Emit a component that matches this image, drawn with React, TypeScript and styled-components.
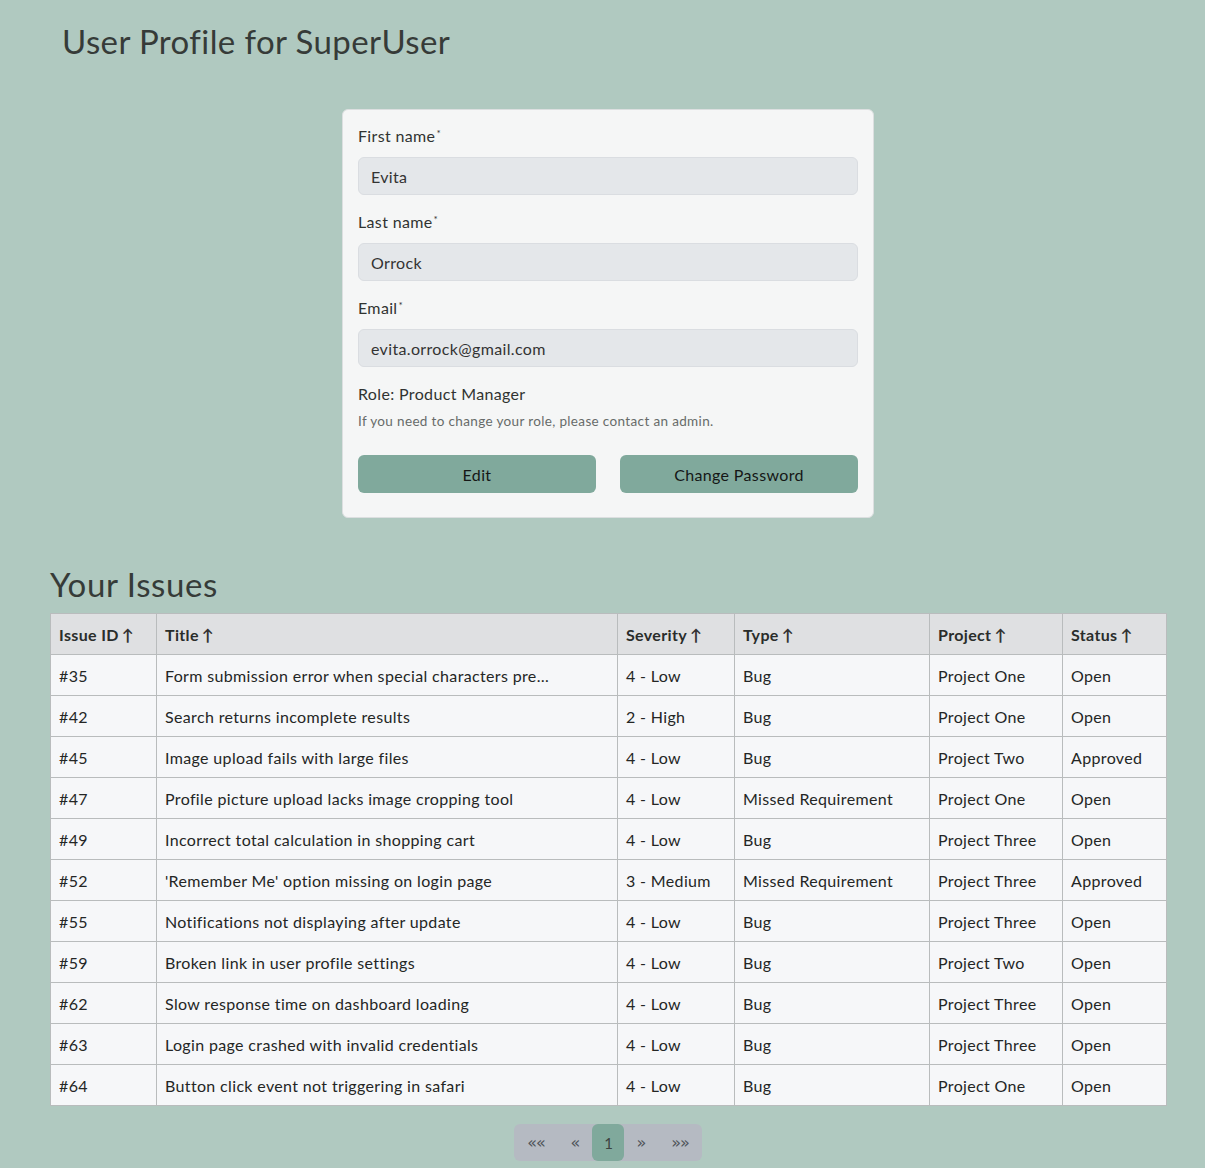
import React from "react";
import styled, { createGlobalStyle } from "styled-components";

const GlobalStyle = createGlobalStyle`
  html, body {
    margin: 0;
    padding: 0;
    background: #b0c9c0;
    font-family: Lato, "Open Sans", sans-serif;
    letter-spacing: 0.35px;
    color: #212529;
  }
`;

const Page = styled.div`
  min-height: 1168px;
  padding: 0 39px 8px 50px;
  box-sizing: border-box;
`;

const PageTitle = styled.h1`
  margin: 0;
  padding: 21px 0 0 12px;
  font-size: 33px;
  font-weight: 400;
  letter-spacing: 0.4px;
  line-height: 40px;
  color: #363b38;
`;

const CardRow = styled.div`
  display: flex;
  justify-content: center;
  padding: 48px 0 0 0;
`;

const Card = styled.form`
  width: 532px;
  box-sizing: border-box;
  padding: 15px 15px 24px;
  background: #f5f6f6;
  border: 1px solid #dcdfe0;
  border-radius: 6px;
  display: flex;
  flex-direction: column;
`;

const Label = styled.label`
  font-size: 16px;
  line-height: 22px;
  color: #303331;
  margin-bottom: 10px;
`;

const Star = styled.span`
  font-size: 10px;
  line-height: 0;
  position: relative;
  top: -5px;
  margin-left: 1px;
`;

const Input = styled.input`
  height: 38px;
  box-sizing: border-box;
  padding: 0 12px;
  margin-bottom: 16px;
  background: #e4e7ea;
  border: 1px solid #dadde1;
  border-radius: 6px;
  font-family: inherit;
  letter-spacing: inherit;
  font-size: 16px;
  color: #333;
  outline: none;
`;

const Role = styled.div`
  font-size: 16px;
  line-height: 22px;
  color: #303331;
`;

const Hint = styled.div`
  font-size: 13.5px;
  line-height: 20px;
  color: #676b69;
  margin-top: 6px;
`;

const Buttons = styled.div`
  display: grid;
  grid-template-columns: 1fr 1fr;
  gap: 24px;
  margin-top: 24px;
`;

const Button = styled.button`
  height: 38px;
  border: none;
  border-radius: 6px;
  background: #80a99c;
  color: #151716;
  font-family: inherit;
  letter-spacing: inherit;
  font-size: 16px;
  cursor: pointer;
`;

const SectionTitle = styled.h2`
  margin: 46px 0 9px;
  font-size: 33px;
  font-weight: 400;
  letter-spacing: 0.6px;
  line-height: 40px;
  color: #363b38;
`;

const Table = styled.table`
  width: 1116px;
  border-collapse: collapse;
  table-layout: fixed;
  font-size: 16px;
`;

const Th = styled.th<{ $w: number }>`
  width: ${(p) => p.$w}px;
  height: 41px;
  box-sizing: border-box;
  padding: 0 8px;
  text-align: left;
  font-weight: 700;
  color: #2a2d2b;
  background: #dfe0e2;
  border: 1px solid #b9bcbd;
  white-space: nowrap;
`;

const Arrow = styled.span`
  font-weight: 700;
  margin-left: 3px;
  color: #333;
`;

const Td = styled.td`
  height: 41px;
  box-sizing: border-box;
  padding: 0 8px;
  background: #f6f7f9;
  border: 1px solid #b9bcbd;
  color: #242625;
  white-space: nowrap;
  overflow: hidden;
`;

const Pager = styled.div`
  display: flex;
  justify-content: center;
  margin-top: 18px;
`;

const PagerGroup = styled.div`
  display: flex;
  background: #b5bac2;
  border-radius: 6px;
  overflow: hidden;
`;

const PageBtn = styled.button<{ $w: number; $active?: boolean }>`
  width: ${(p) => p.$w}px;
  height: 37px;
  border: none;
  border-radius: 6px;
  background: ${(p) => (p.$active ? "#80a99c" : "transparent")};
  color: ${(p) => (p.$active ? "#3d4240" : "#50555a")};
  font-family: ${(p) => (p.$active ? "Lato, sans-serif" : "\"DejaVu Sans\", sans-serif")};
  letter-spacing: -1px;
  font-size: ${(p) => (p.$active ? 15 : 16)}px;
  padding: 0;
  cursor: pointer;
`;

const columns = [
  { name: "Issue ID", w: 106 },
  { name: "Title", w: 461 },
  { name: "Severity", w: 117 },
  { name: "Type", w: 195 },
  { name: "Project", w: 133 },
  { name: "Status", w: 104 },
];

const issues = [
  ["#35", "Form submission error when special characters pre…", "4 - Low", "Bug", "Project One", "Open"],
  ["#42", "Search returns incomplete results", "2 - High", "Bug", "Project One", "Open"],
  ["#45", "Image upload fails with large files", "4 - Low", "Bug", "Project Two", "Approved"],
  ["#47", "Profile picture upload lacks image cropping tool", "4 - Low", "Missed Requirement", "Project One", "Open"],
  ["#49", "Incorrect total calculation in shopping cart", "4 - Low", "Bug", "Project Three", "Open"],
  ["#52", "'Remember Me' option missing on login page", "3 - Medium", "Missed Requirement", "Project Three", "Approved"],
  ["#55", "Notifications not displaying after update", "4 - Low", "Bug", "Project Three", "Open"],
  ["#59", "Broken link in user profile settings", "4 - Low", "Bug", "Project Two", "Open"],
  ["#62", "Slow response time on dashboard loading", "4 - Low", "Bug", "Project Three", "Open"],
  ["#63", "Login page crashed with invalid credentials", "4 - Low", "Bug", "Project Three", "Open"],
  ["#64", "Button click event not triggering in safari", "4 - Low", "Bug", "Project One", "Open"],
];

const App = () => {
  return (
    <Page>
      <GlobalStyle />
      <PageTitle>User Profile for SuperUser</PageTitle>
      <CardRow>
        <Card onSubmit={(e) => e.preventDefault()}>
          <Label>
            First name<Star>*</Star>
          </Label>
          <Input defaultValue="Evita" readOnly />
          <Label>
            Last name<Star>*</Star>
          </Label>
          <Input defaultValue="Orrock" readOnly />
          <Label>
            Email<Star>*</Star>
          </Label>
          <Input defaultValue="evita.orrock@gmail.com" readOnly />
          <Role>Role: Product Manager</Role>
          <Hint>If you need to change your role, please contact an admin.</Hint>
          <Buttons>
            <Button type="button">Edit</Button>
            <Button type="button">Change Password</Button>
          </Buttons>
        </Card>
      </CardRow>

      <SectionTitle>Your Issues</SectionTitle>
      <Table>
        <thead>
          <tr>
            {columns.map((c) => (
              <Th key={c.name} $w={c.w}>
                {c.name}
                <Arrow>↑</Arrow>
              </Th>
            ))}
          </tr>
        </thead>
        <tbody>
          {issues.map((row) => (
            <tr key={row[0]}>
              {row.map((cell, i) => (
                <Td key={i}>{cell}</Td>
              ))}
            </tr>
          ))}
        </tbody>
      </Table>

      <Pager>
        <PagerGroup>
          <PageBtn $w={44}>««</PageBtn>
          <PageBtn $w={34}>«</PageBtn>
          <PageBtn $w={32} $active>
            1
          </PageBtn>
          <PageBtn $w={34}>»</PageBtn>
          <PageBtn $w={44}>»»</PageBtn>
        </PagerGroup>
      </Pager>
    </Page>
  );
};

export default App;
